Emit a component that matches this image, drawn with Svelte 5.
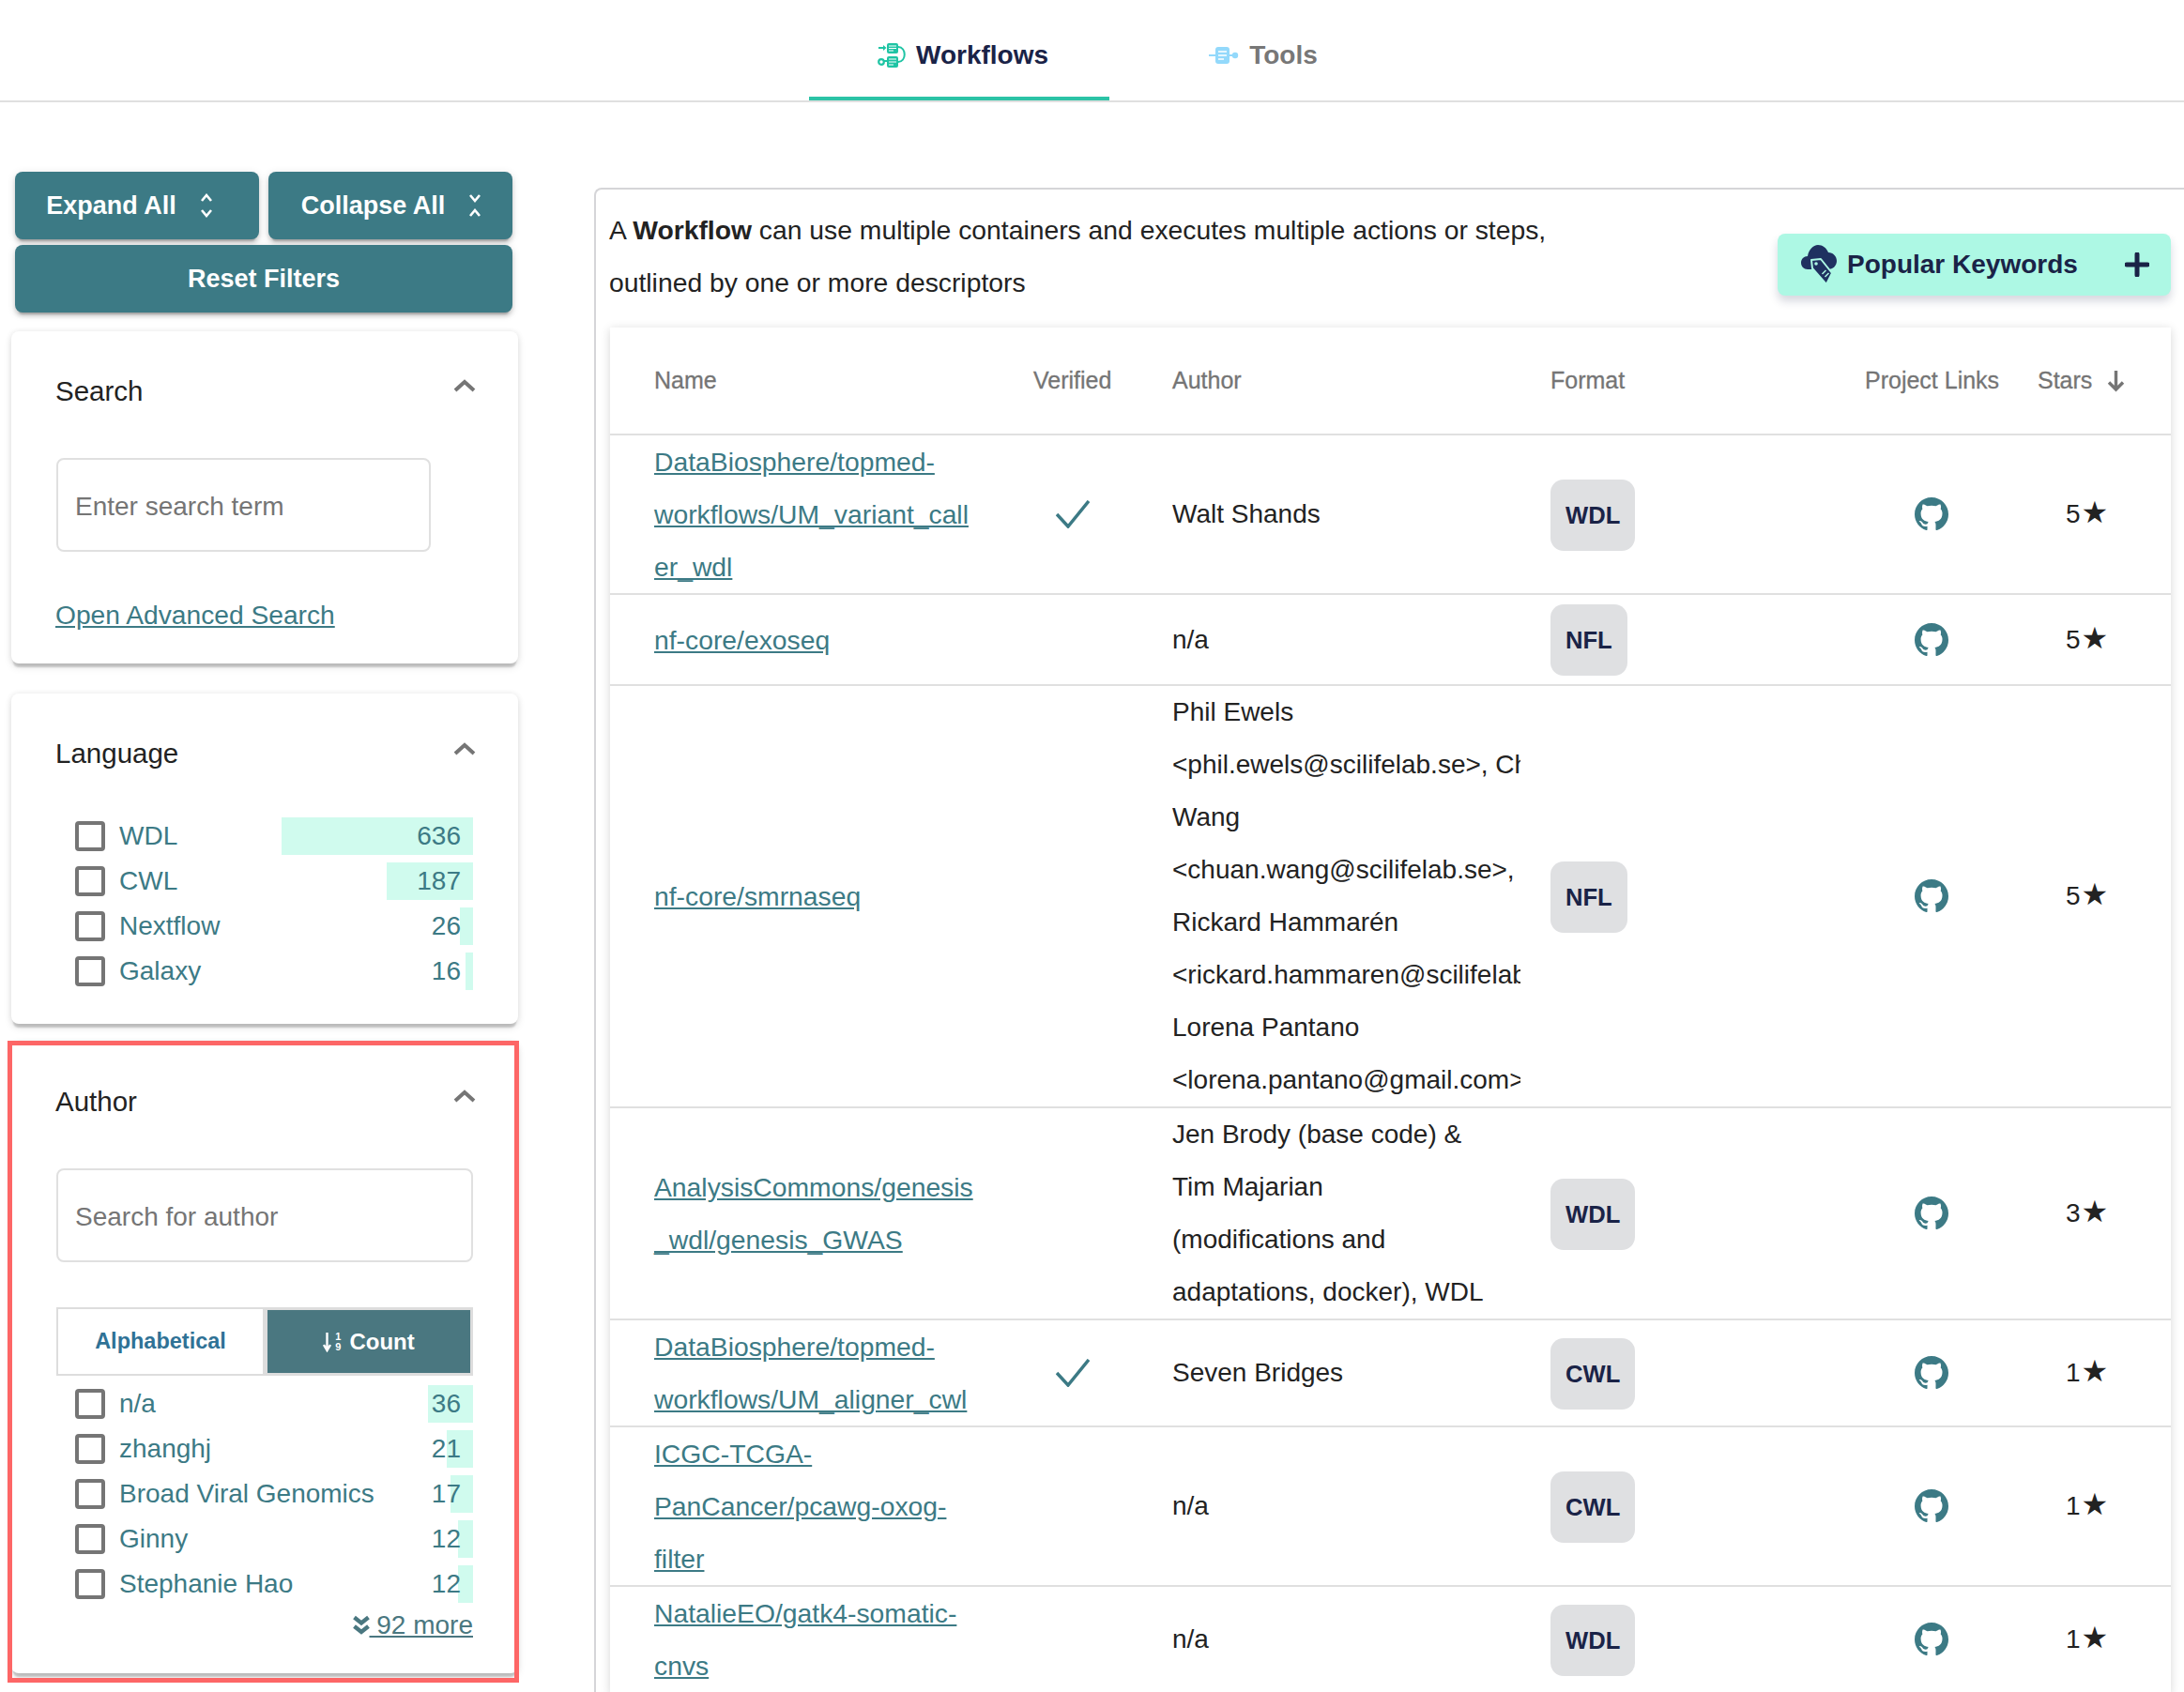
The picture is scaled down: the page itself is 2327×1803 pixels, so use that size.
<script>
  const languages = [
    { name: 'WDL', count: 636, bar: 204 },
    { name: 'CWL', count: 187, bar: 92 },
    { name: 'Nextflow', count: 26, bar: 14 },
    { name: 'Galaxy', count: 16, bar: 8 }
  ];
  const authors = [
    { name: 'n/a', count: 36, bar: 48 },
    { name: 'zhanghj', count: 21, bar: 28 },
    { name: 'Broad Viral Genomics', count: 17, bar: 24 },
    { name: 'Ginny', count: 12, bar: 16 },
    { name: 'Stephanie Hao', count: 12, bar: 16 }
  ];
  const rows = [
    { name: ['DataBiosphere/topmed-', 'workflows/UM_variant_call', 'er_wdl'], verified: true, author: ['Walt Shands'], format: 'WDL', stars: 5 },
    { name: ['nf-core/exoseq'], verified: false, author: ['n/a'], format: 'NFL', stars: 5 },
    { name: ['nf-core/smrnaseq'], verified: false, author: ['Phil Ewels', '<phil.ewels@scilifelab.se>, Chuan', 'Wang', '<chuan.wang@scilifelab.se>,', 'Rickard Hammarén', '<rickard.hammaren@scilifelab.se>,', 'Lorena Pantano', '<lorena.pantano@gmail.com>'], format: 'NFL', stars: 5 },
    { name: ['AnalysisCommons/genesis', '_wdl/genesis_GWAS'], verified: false, author: ['Jen Brody (base code) &', 'Tim Majarian', '(modifications and', 'adaptations, docker), WDL'], format: 'WDL', stars: 3 },
    { name: ['DataBiosphere/topmed-', 'workflows/UM_aligner_cwl'], verified: true, author: ['Seven Bridges'], format: 'CWL', stars: 1 },
    { name: ['ICGC-TCGA-', 'PanCancer/pcawg-oxog-', 'filter'], verified: false, author: ['n/a'], format: 'CWL', stars: 1 },
    { name: ['NatalieEO/gatk4-somatic-', 'cnvs'], verified: false, author: ['n/a'], format: 'WDL', stars: 1 }
  ];
  const gh = 'M8 0C3.58 0 0 3.58 0 8c0 3.54 2.29 6.53 5.47 7.59.4.07.55-.17.55-.38 0-.19-.01-.82-.01-1.49-2.01.37-2.53-.49-2.69-.94-.09-.23-.48-.94-.82-1.13-.28-.15-.68-.52-.01-.53.63-.01 1.08.58 1.23.82.72 1.21 1.87.87 2.33.66.07-.52.28-.87.51-1.07-1.78-.2-3.64-.89-3.64-3.95 0-.87.31-1.59.82-2.15-.08-.2-.36-1.02.08-2.12 0 0 .67-.21 2.2.82.64-.18 1.32-.27 2-.27.68 0 1.36.09 2 .27 1.53-1.04 2.2-.82 2.2-.82.44 1.1.16 1.92.08 2.12.51.56.82 1.27.82 2.15 0 3.07-1.87 3.75-3.65 3.95.29.25.54.73.54 1.48 0 1.07-.01 1.93-.01 2.2 0 .21.15.46.55.38A8.013 8.013 0 0016 8c0-4.42-3.58-8-8-8z';
</script>

{#snippet chevron()}
  <svg class="chev" viewBox="0 0 24 14" aria-hidden="true"><path d="M2 12 L12 3 L22 12" fill="none" stroke="#757575" stroke-width="4" /></svg>
{/snippet}

{#snippet filterRow(item)}
  <label class="frow">
    <span class="box"></span>
    <span class="flabel">{item.name}</span>
    <span class="bar" style="width:{item.bar}px"></span>
    <span class="fcount">{item.count}</span>
  </label>
{/snippet}

<div class="page">
  <nav class="tabs">
    <div class="tab active">
      <svg width="30" height="26" viewBox="0 0 30 26" aria-hidden="true">
        <g fill="#1fc4a4">
          <rect x="10" y="0" width="12" height="11" rx="2" />
          <rect x="10" y="14" width="12" height="12" rx="2" />
          <path d="M1 4h5V2l3.500 3L6 8V6H1z" />
        </g>
        <circle cx="4" cy="20" r="2.800" fill="none" stroke="#1fc4a4" stroke-width="2.200" />
        <path d="M6.500 19h4" stroke="#1fc4a4" stroke-width="2" />
        <path d="M22 4c9 0 9 16 0 16" fill="none" stroke="#1fc4a4" stroke-width="2" />
        <path d="M12 3h8M12 5.500h8M12 8h5M12 17h8M12 20h8M12 23h5" stroke="#fff" stroke-width="1.200" />
      </svg>
      <span>Workflows</span>
    </div>
    <div class="tab">
      <svg width="32" height="18" viewBox="0 0 32 18" aria-hidden="true">
        <rect x="7" y="0" width="15" height="18" rx="3" fill="#93d9fb" />
        <path d="M0 9h7" stroke="#93d9fb" stroke-width="2" />
        <path d="M10 5h9M10 9h9M10 13h6" stroke="#fff" stroke-width="1.500" />
        <path d="M22 9h3" stroke="#93d9fb" stroke-width="2" />
        <circle cx="28" cy="9" r="3.200" fill="#93d9fb" />
      </svg>
      <span>Tools</span>
    </div>
  </nav>

  <div class="layout">
    <aside class="side">
      <div class="btns">
        <button class="btn expand">Expand All
          <svg width="16" height="26" viewBox="0 0 16 26" aria-hidden="true"><path d="M3 8 L8 2 L13 8 M3 18 L8 24 L13 18" fill="none" stroke="#fff" stroke-width="2.600" /></svg>
        </button>
        <button class="btn collapse">Collapse All
          <svg width="16" height="26" viewBox="0 0 16 26" aria-hidden="true"><path d="M3 2 L8 8 L13 2 M3 24 L8 18 L13 24" fill="none" stroke="#fff" stroke-width="2.600" /></svg>
        </button>
        <button class="btn wide">Reset Filters</button>
      </div>

      <section class="card search">
        <header class="chead"><h3>Search</h3>{@render chevron()}</header>
        <input class="inp narrow" placeholder="Enter search term" />
        <a class="adv" href="#adv">Open Advanced Search</a>
      </section>

      <section class="card language">
        <header class="chead"><h3>Language</h3>{@render chevron()}</header>
        {#each languages as l}{@render filterRow(l)}{/each}
      </section>

      <section class="card author">
        <header class="chead"><h3>Author</h3>{@render chevron()}</header>
        <input class="inp" placeholder="Search for author" />
        <div class="toggle">
          <button class="tog alpha">Alphabetical</button>
          <button class="tog on">
            <svg width="9" height="22" viewBox="0 0 9 22" aria-hidden="true"><path d="M4.500 1v17M1 14l3.500 6 3.500-6" fill="none" stroke="#fff" stroke-width="2.400" /></svg>
            <span class="frac"><span>1</span><span>9</span></span>
            <span class="ctext">Count</span>
          </button>
        </div>
        {#each authors as a}{@render filterRow(a)}{/each}
        <div class="more">
          <svg width="18" height="22" viewBox="0 0 18 22" aria-hidden="true"><path d="M1.500 2.500 L9 8.500 L16.500 2.500 M1.500 12 L9 18 L16.500 12" fill="none" stroke="#4a7780" stroke-width="4.400" /></svg><a href="#more">&nbsp;92 more</a>
        </div>
      </section>
    </aside>

    <main class="panel">
      <div class="intro">
        <p>A <b>Workflow</b> can use multiple containers and executes multiple actions or steps, outlined by one or more descriptors</p>
        <button class="kw">
          <svg width="38" height="42" viewBox="0 0 38 42" aria-hidden="true">
            <path d="M7 26C3 26 0 23 0 19c0-4 3-7 7-7 1-7 6-12 11-12 5 0 9 3 11 8 5 0 9 4 9 9s-4 9-9 9H7z" fill="#1f3160" />
            <path d="M11 16l10-1 12 15-6 12-15-17z" fill="#1f3160" stroke="#adf8e4" stroke-width="2" stroke-linejoin="round" />
            <circle cx="16" cy="20" r="1.800" fill="#adf8e4" />
            <path d="M22.500 31l4-4M25.500 34l4-4" stroke="#adf8e4" stroke-width="1.500" />
          </svg>
          <span>Popular Keywords</span>
          <svg class="plus" width="26" height="26" viewBox="0 0 26 26" aria-hidden="true"><path d="M13 2v22M2 13h22" stroke="#1a2347" stroke-width="5" stroke-linecap="round" /></svg>
        </button>
      </div>

      <table>
        <colgroup>
          <col class="c1" /><col class="c2" /><col class="c3" /><col class="c4" /><col class="c5" /><col class="c6" />
        </colgroup>
        <thead>
          <tr>
            <th class="first">Name</th>
            <th>Verified</th>
            <th>Author</th>
            <th>Format</th>
            <th>Project Links</th>
            <th><span class="sh">Stars <svg width="19" height="24" viewBox="0 0 19 24" aria-hidden="true"><path d="M9.500 1v20M2 13.500l7.500 7.500 7.500-7.500" fill="none" stroke="#757575" stroke-width="3.400" /></svg></span></th>
          </tr>
        </thead>
        <tbody>
          {#each rows as r}
            <tr>
              <td class="first name">
                <a href="#wf">{#each r.name as n, i}{#if i}<br />{/if}{n}{/each}</a>
              </td>
              <td>
                {#if r.verified}
                  <svg class="check" width="36" height="30" viewBox="0 0 36 30" aria-hidden="true"><path d="M1 15 L13 28 L35 1" fill="none" stroke="#3c7a85" stroke-width="3.500" /></svg>
                {/if}
              </td>
              <td>{#each r.author as line}<div class="aline">{line}</div>{/each}</td>
              <td><span class="badge">{r.format}</span></td>
              <td><svg class="gh" width="36" height="36" viewBox="0 0 16 16" aria-hidden="true"><path d={gh} fill="#3c7a85" /></svg></td>
              <td class="stars">{r.stars}<span class="star">★</span></td>
            </tr>
          {/each}
        </tbody>
      </table>
    </main>
  </div>

  <div class="frame"></div>
</div>

<style>
  :global(body) { margin: 0; background: #fff; }
  .page {
    position: relative;
    width: 2327px;
    height: 1803px;
    overflow: hidden;
    font-family: "Liberation Sans", Arial, sans-serif;
    font-size: 28px;
    color: #222;
  }
  .tabs {
    display: flex;
    height: 107px;
    padding-left: 862px;
    border-bottom: 2px solid #e0e0e0;
  }
  .tab {
    box-sizing: border-box;
    width: 320px;
    height: 107px;
    padding: 11px 0 0 8px;
    display: flex;
    align-items: center;
    justify-content: center;
    gap: 11px;
    font-weight: 700;
    color: #777;
  }
  .tab.active { color: #1a2347; border-bottom: 4px solid #2cc3a6; padding-top: 15px; }
  .layout { display: flex; align-items: flex-start; }
  .side {
    flex: none;
    box-sizing: border-box;
    width: 552px;
    padding: 74px 0 0 12px;
  }
  .btns {
    display: grid;
    grid-template-columns: 260px 260px;
    gap: 6px 10px;
    margin: 0 6px 0 4px;
  }
  .btn {
    height: 72px;
    border: 0;
    border-radius: 8px;
    background: #3c7a85;
    color: #fff;
    font: 700 27px "Liberation Sans", Arial, sans-serif;
    display: flex;
    align-items: center;
    justify-content: center;
    gap: 24px;
    box-shadow: 0 6px 2px -4px rgba(0,0,0,.2), 0 4px 4px 0 rgba(0,0,0,.14), 0 2px 10px 0 rgba(0,0,0,.12);
  }
  .btn.expand { padding-right: 21px; }
  .btn.collapse { padding-right: 3px; }
  .btn.wide { grid-column: 1 / 3; }
  .card {
    background: #fff;
    border-radius: 8px;
    box-shadow: 0 6px 2px -2px rgba(0,0,0,.18), 0 4px 8px 0 rgba(0,0,0,.1), 0 0 6px 0 rgba(0,0,0,.08);
    box-sizing: border-box;
  }
  .search { height: 354px; margin-top: 20px; }
  .language { height: 352px; margin-top: 32px; }
  .author { height: 673px; margin-top: 19px; }
  .chead {
    height: 127px;
    padding: 0 45px 0 47px;
    display: flex;
    align-items: center;
    justify-content: space-between;
  }
  .language .chead { height: 128px; }
  .chead h3 { margin: 0; font-size: 29.500px; font-weight: 400; color: #222; }
  .chev { width: 24px; height: 14px; margin-bottom: 11px; }
  .inp {
    display: block;
    box-sizing: border-box;
    width: 444px;
    height: 100px;
    margin: 8px 0 0 48px;
    padding: 3px 18px 0;
    border: 2px solid #e0e0e0;
    border-radius: 8px;
    outline: 0;
    font: 28px "Liberation Sans", Arial, sans-serif;
  }
  .inp.narrow { width: 399px; }
  .inp::placeholder { color: #757575; opacity: 1; }
  .adv {
    display: block;
    margin: 49px 0 0 47px;
    color: #3c7a85;
    font-size: 28.200px;
    line-height: 36px;
  }
  .frow {
    position: relative;
    display: flex;
    align-items: center;
    height: 48px;
    margin: 0 48px 0 68px;
  }
  .box {
    box-sizing: border-box;
    flex: none;
    width: 32px;
    height: 32px;
    margin-right: 15px;
    border: 4px solid #757575;
    border-radius: 4px;
  }
  .flabel { flex: 1; color: #3c7a85; }
  .bar {
    position: absolute;
    right: 0;
    top: 4px;
    height: 40px;
    background: #d0fbee;
  }
  .fcount { position: relative; padding-right: 13px; color: #3c7a85; }
  .toggle {
    display: flex;
    margin: 48px 48px 6px 48px;
    height: 73px;
  }
  .tog {
    box-sizing: border-box;
    width: 222px;
    height: 73px;
    border: 3px solid #ddd;
    background: #fff;
    color: #2f7296;
    font: 700 24px "Liberation Sans", Arial, sans-serif;
    display: flex;
    align-items: center;
    justify-content: center;
    gap: 4px;
  }
  .tog.alpha { font-size: 23.500px; border-width: 2px; }
  .tog.on { background: #4a7780; color: #fff; }
  .frac {
    display: flex;
    flex-direction: column;
    font-size: 11px;
    line-height: 11px;
    text-align: center;
  }
  .ctext { margin-left: 5px; }
  .more {
    height: 40px;
    margin-right: 48px;
    display: flex;
    align-items: center;
    justify-content: flex-end;
  }
  .more a { color: #4a7780; }
  .panel {
    box-sizing: border-box;
    flex: none;
    width: 1712px;
    margin: 91px 0 0 81px;
    padding: 18px 0 0 14px;
    background: #fff;
    border-top: 2px solid #d5d5d8;
    border-left: 2px solid #d5d5d8;
    border-top-left-radius: 8px;
  }
  .intro {
    display: flex;
    align-items: flex-start;
    justify-content: space-between;
    width: 1664px;
    height: 129px;
  }
  .intro p {
    margin: -3px 0 0;
    width: 1060px;
    font-size: 28.300px;
    line-height: 56px;
  }
  .kw {
    width: 419px;
    height: 66px;
    margin-top: 29px;
    padding: 0 23px 0 25px;
    border: 0;
    border-radius: 8px;
    background: #adf8e4;
    color: #1a2347;
    font: 700 28px "Liberation Sans", Arial, sans-serif;
    display: flex;
    align-items: center;
    gap: 11px;
    box-shadow: 0 6px 10px rgba(30,40,80,.18);
  }
  .plus { margin-left: auto; }
  table {
    width: 1663px;
    margin-left: 1px;
    border-collapse: separate;
    border-spacing: 0;
    table-layout: fixed;
    background: #fff;
    box-shadow: 0 2px 10px rgba(0,0,0,.16);
  }
  .c1 { width: 451px; }
  .c2 { width: 148px; }
  .c3 { width: 403px; }
  .c4 { width: 335px; }
  .c5 { width: 184px; }
  .c6 { width: 142px; }
  th {
    height: 113px;
    padding: 0;
    border-bottom: 2px solid #e0e0e0;
    text-align: left;
    font-size: 25px;
    font-weight: 400;
    color: #757575;
    -webkit-text-stroke: .3px #757575;
  }
  .sh { display: flex; align-items: center; gap: 16px; }
  td {
    padding: 0;
    border-bottom: 2px solid #e0e0e0;
    line-height: 56px;
    vertical-align: middle;
  }
  .first { padding-left: 47px; box-sizing: border-box; }
  .name { font-size: 28.300px; }
  td a { color: #3c7a85; }
  .check { display: block; margin-left: 24px; }
  .aline { width: 371px; overflow: hidden; white-space: nowrap; }
  .badge {
    display: inline-flex;
    align-items: center;
    height: 76px;
    margin: 10px 0 9px;
    padding: 0 16px;
    border-radius: 14px;
    background: #dfe0e2;
    color: #1a2347;
    font-size: 25.600px;
    font-weight: 700;
    vertical-align: middle;
  }
  .gh { display: block; margin-left: 53px; }
  .stars { padding-left: 30px; }
  .star { font-family: "DejaVu Sans", sans-serif; font-size: 32px; line-height: 0; margin-left: 1px; }
  .frame {
    position: absolute;
    left: 8px;
    top: 1109px;
    width: 545px;
    height: 684px;
    box-sizing: border-box;
    border: 5px solid #fd6666;
    pointer-events: none;
  }
</style>
